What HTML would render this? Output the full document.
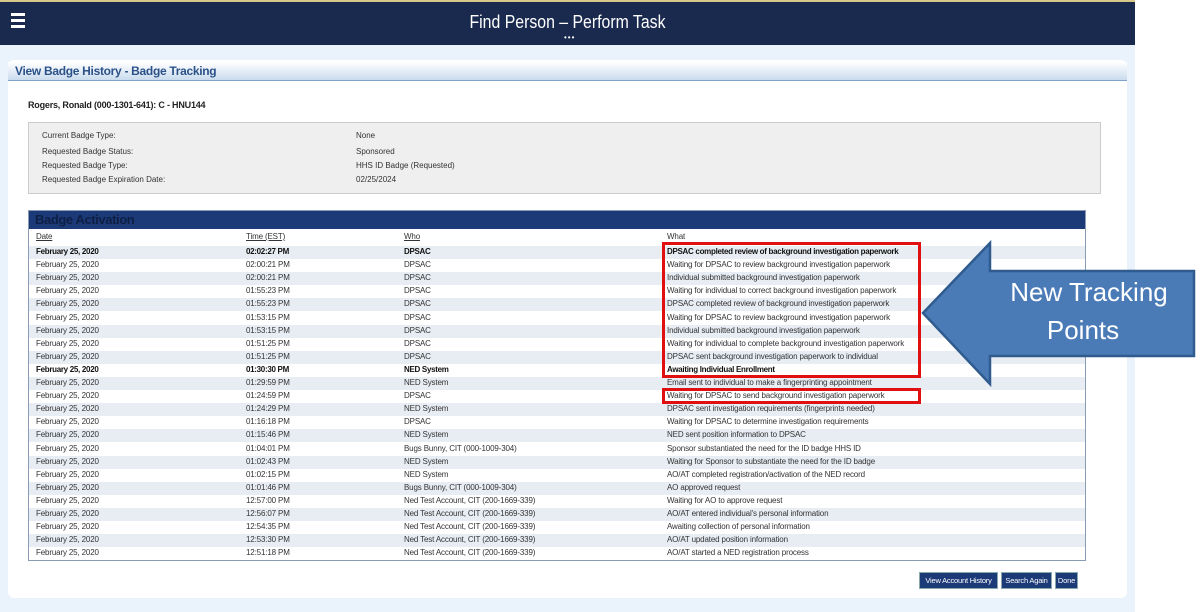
<!DOCTYPE html>
<html><head><meta charset="utf-8"><style>
*{margin:0;padding:0;box-sizing:border-box}
body{width:1200px;height:612px;background:#fff;font-family:"Liberation Sans",sans-serif;position:relative;overflow:hidden;color:#222}
.hdr{position:absolute;left:0;top:0;width:1135px;height:45px;background:#1a2a4e;border-top:2px solid #d8c98a}
.hdr .t{position:absolute;left:0;width:1135px;top:10px;text-align:center;color:#fff;font-size:18px;transform:scaleX(.88)}
.hdr .d{position:absolute;left:564px;top:31px;color:#fff;font-size:8px;letter-spacing:1px}
.ham{position:absolute;left:11px;top:11px;width:14px}
.ham i{display:block;height:3px;background:#fff;margin-bottom:3px}
.pg{position:absolute;left:0;top:45px;width:1135px;height:567px;background:#eaf2fb}
.panel{position:absolute;left:8px;top:60px;width:1119px;height:538px;background:#fff;border-radius:6px}
.tb{position:absolute;left:8px;top:62px;width:1119px;height:19px;background:linear-gradient(#fff,#c9dbee);border-bottom:1px solid #7fa3c8;color:#2b5288;font-weight:bold;font-size:12px;padding:2px 7px;letter-spacing:-.3px}
.nm{position:absolute;left:28px;top:100px;font-size:9px;font-weight:bold;letter-spacing:-.2px}
.info{position:absolute;left:28px;top:122px;width:1073px;height:72px;background:#efefef;border:1px solid #ccc;font-size:8px;color:#333}
.info div{position:absolute;white-space:nowrap}
.tbl{position:absolute;left:28px;top:210px;width:1058px;height:351px;border:1px solid #8a9bb5;background:#fff}
.th{height:18px;background:#1c3a78;color:#0d1f45;font-weight:bold;font-size:13px;padding:1px 6px;letter-spacing:-.4px}
.r{position:absolute;left:0;width:1056px;height:13px;font-size:8px;color:#333;white-space:nowrap;letter-spacing:-.15px}
.r.s{background:#e8edf4}
.r span{position:absolute;top:1px}
.r b{font-weight:bold;color:#111;letter-spacing:-.3px}
.c1{left:7px}.c2{left:217px}.c3{left:375px}.c4{left:638px}
.hd span{text-decoration:underline}
.box{position:absolute;border:3px solid #e01010}
.btn{position:absolute;top:572px;height:17px;background:#1c3a78;color:#fff;font-size:7.5px;border:1px solid #8aa;padding:3px 0;white-space:nowrap;text-align:center;letter-spacing:-.2px}
</style></head><body>
<div class="hdr"><div class="ham"><i></i><i></i><i></i></div><div class="t">Find Person – Perform Task</div><div class="d">•••</div></div>
<div class="pg"></div>
<div class="panel"></div>
<div class="tb">View Badge History - Badge Tracking</div>
<div class="nm">Rogers, Ronald (000-1301-641): C - HNU144</div>
<div class="info">
<div style="left:13px;top:8px">Current Badge Type:</div><div style="left:327px;top:8px">None</div>
<div style="left:13px;top:24px">Requested Badge Status:</div><div style="left:327px;top:24px">Sponsored</div>
<div style="left:13px;top:38px">Requested Badge Type:</div><div style="left:327px;top:38px">HHS ID Badge (Requested)</div>
<div style="left:13px;top:52px">Requested Badge Expiration Date:</div><div style="left:327px;top:52px">02/25/2024</div>
</div>
<div class="tbl"><div class="th">Badge Activation</div>
<div class="r hd" style="top:20px"><span class="c1">Date</span><span class="c2">Time (EST)</span><span class="c3">Who</span><span class="c4" style="text-decoration:none">What</span></div>
<div id="rows"></div>
</div>
<script>
var d=[["02:02:27 PM","DPSAC","DPSAC completed review of background investigation paperwork",1],
["02:00:21 PM","DPSAC","Waiting for DPSAC to review background investigation paperwork"],
["02:00:21 PM","DPSAC","Individual submitted background investigation paperwork"],
["01:55:23 PM","DPSAC","Waiting for individual to correct background investigation paperwork"],
["01:55:23 PM","DPSAC","DPSAC completed review of background investigation paperwork"],
["01:53:15 PM","DPSAC","Waiting for DPSAC to review background investigation paperwork"],
["01:53:15 PM","DPSAC","Individual submitted background investigation paperwork"],
["01:51:25 PM","DPSAC","Waiting for individual to complete background investigation paperwork"],
["01:51:25 PM","DPSAC","DPSAC sent background investigation paperwork to individual"],
["01:30:30 PM","NED System","Awaiting Individual Enrollment",1],
["01:29:59 PM","NED System","Email sent to individual to make a fingerprinting appointment"],
["01:24:59 PM","DPSAC","Waiting for DPSAC to send background investigation paperwork"],
["01:24:29 PM","NED System","DPSAC sent investigation requirements (fingerprints needed)"],
["01:16:18 PM","DPSAC","Waiting for DPSAC to determine investigation requirements"],
["01:15:46 PM","NED System","NED sent position information to DPSAC"],
["01:04:01 PM","Bugs Bunny, CIT (000-1009-304)","Sponsor substantiated the need for the ID badge HHS ID"],
["01:02:43 PM","NED System","Waiting for Sponsor to substantiate the need for the ID badge"],
["01:02:15 PM","NED System","AO/AT completed registration/activation of the NED record"],
["01:01:46 PM","Bugs Bunny, CIT (000-1009-304)","AO approved request"],
["12:57:00 PM","Ned Test Account, CIT (200-1669-339)","Waiting for AO to approve request"],
["12:56:07 PM","Ned Test Account, CIT (200-1669-339)","AO/AT entered individual's personal information"],
["12:54:35 PM","Ned Test Account, CIT (200-1669-339)","Awaiting collection of personal information"],
["12:53:30 PM","Ned Test Account, CIT (200-1669-339)","AO/AT updated position information"],
["12:51:18 PM","Ned Test Account, CIT (200-1669-339)","AO/AT started a NED registration process"]];
var h="";d.forEach(function(x,i){var w=function(t){return x[3]?"<b>"+t+"</b>":t};
h+='<div class="r'+(i%2==0?' s':'')+'" style="top:'+(35+i*13.1)+'px"><span class="c1">'+w("February 25, 2020")+'</span><span class="c2">'+w(x[0])+'</span><span class="c3">'+w(x[1])+'</span><span class="c4">'+w(x[2])+'</span></div>';});
document.getElementById("rows").innerHTML=h;
</script>
<div class="box" style="left:662px;top:242px;width:259px;height:136px"></div>
<div class="box" style="left:662px;top:388px;width:259px;height:16px"></div>
<svg style="position:absolute;left:918px;top:238px" width="282" height="152">
<polygon points="5,75 72,5 72,33 276,33 276,118 72,118 72,146" fill="#4a7bb7" stroke="#2f5b8e" stroke-width="2.5"/>
<text x="171" y="63" text-anchor="middle" fill="#fff" font-size="26" font-family="Liberation Sans,sans-serif">New Tracking</text>
<text x="165" y="101" text-anchor="middle" fill="#fff" font-size="26" font-family="Liberation Sans,sans-serif">Points</text>
</svg>
<div class="btn" style="left:919px;width:79px">View Account History</div>
<div class="btn" style="left:1001px;width:51px">Search Again</div>
<div class="btn" style="left:1055px;width:23px">Done</div>
</body></html>
